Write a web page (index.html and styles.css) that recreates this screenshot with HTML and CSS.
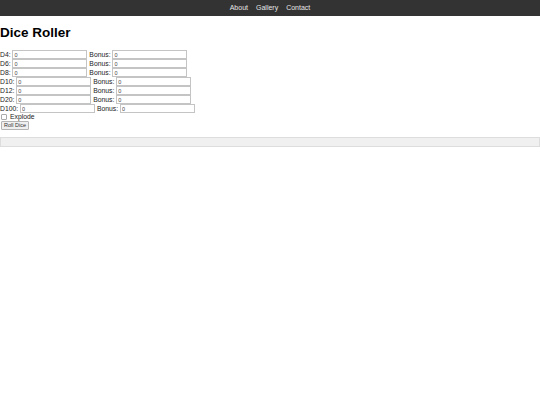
FILE: index.html
```html
<!DOCTYPE html>
<html>
<head>
<meta charset="utf-8">
<title>Dice Roller</title>
<link rel="stylesheet" href="styles.css">
</head>
<body>
<nav class="topnav">
  <a href="#">About</a>
  <a href="#">Gallery</a>
  <a href="#">Contact</a>
</nav>
<h1 class="title">Dice Roller</h1>
<form class="dice-form">
  <div class="row">D4: <input class="num" type="text" value="0"> Bonus: <input class="num" type="text" value="0"></div>
  <div class="row">D6: <input class="num" type="text" value="0"> Bonus: <input class="num" type="text" value="0"></div>
  <div class="row">D8: <input class="num" type="text" value="0"> Bonus: <input class="num" type="text" value="0"></div>
  <div class="row">D10: <input class="num" type="text" value="0"> Bonus: <input class="num" type="text" value="0"></div>
  <div class="row">D12: <input class="num" type="text" value="0"> Bonus: <input class="num" type="text" value="0"></div>
  <div class="row">D20: <input class="num" type="text" value="0"> Bonus: <input class="num" type="text" value="0"></div>
  <div class="row">D100: <input class="num" type="text" value="0"> Bonus: <input class="num" type="text" value="0"></div>
  <label class="check-row"><input class="check" type="checkbox"> Explode</label>
  <button class="roll" type="button">Roll Dice</button>
</form>
<div class="result"></div>
</body>
</html>
```
FILE: styles.css
```css
html, body {
  margin: 0;
  padding: 0;
  background: #fff;
  font-family: "Liberation Sans", Arial, sans-serif;
  color: #000;
}

.topnav {
  height: 16px;
  background: #333;
  display: flex;
  justify-content: center;
  align-items: center;
  gap: 8px;
}

.topnav a {
  color: #e6e6e6;
  text-decoration: none;
  font-size: 7px;
  line-height: 16px;
}

.title {
  font-size: 13.5px;
  font-weight: bold;
  line-height: 16px;
  margin: 9px 0 9px 0;
}

.dice-form {
  margin: 0;
  font-size: 6.8px;
  color: #222;
}

.row {
  height: 9px;
  line-height: 9px;
  white-space: nowrap;
}

.num {
  box-sizing: border-box;
  width: 75px;
  height: 9px;
  margin: 0;
  padding: 0 1px;
  border: 1px solid #c4c4c4;
  font-family: "Liberation Sans", Arial, sans-serif;
  font-size: 5.5px;
  vertical-align: top;
  background: #fff;
  color: #444;
}

.check-row {
  display: flex;
  align-items: center;
  height: 8px;
  line-height: 8px;
}

.check {
  appearance: none;
  -webkit-appearance: none;
  box-sizing: border-box;
  width: 6px;
  height: 6px;
  margin: 0 3px 0 1px;
  border: 1px solid #aaa;
  border-radius: 1px;
  background: #fff;
}

.roll {
  display: block;
  box-sizing: border-box;
  height: 9px;
  margin: 0 0 0 1px;
  padding: 0 2px;
  font-family: "Liberation Sans", Arial, sans-serif;
  font-size: 5.5px;
  line-height: 7px;
  border: 1px solid #b4b4b4;
  border-radius: 1px;
  background: #efefef;
  color: #333;
}

.result {
  box-sizing: border-box;
  height: 10px;
  margin-top: 7px;
  background: #f0f0f0;
  border: 1px solid #ddd;
}
```
